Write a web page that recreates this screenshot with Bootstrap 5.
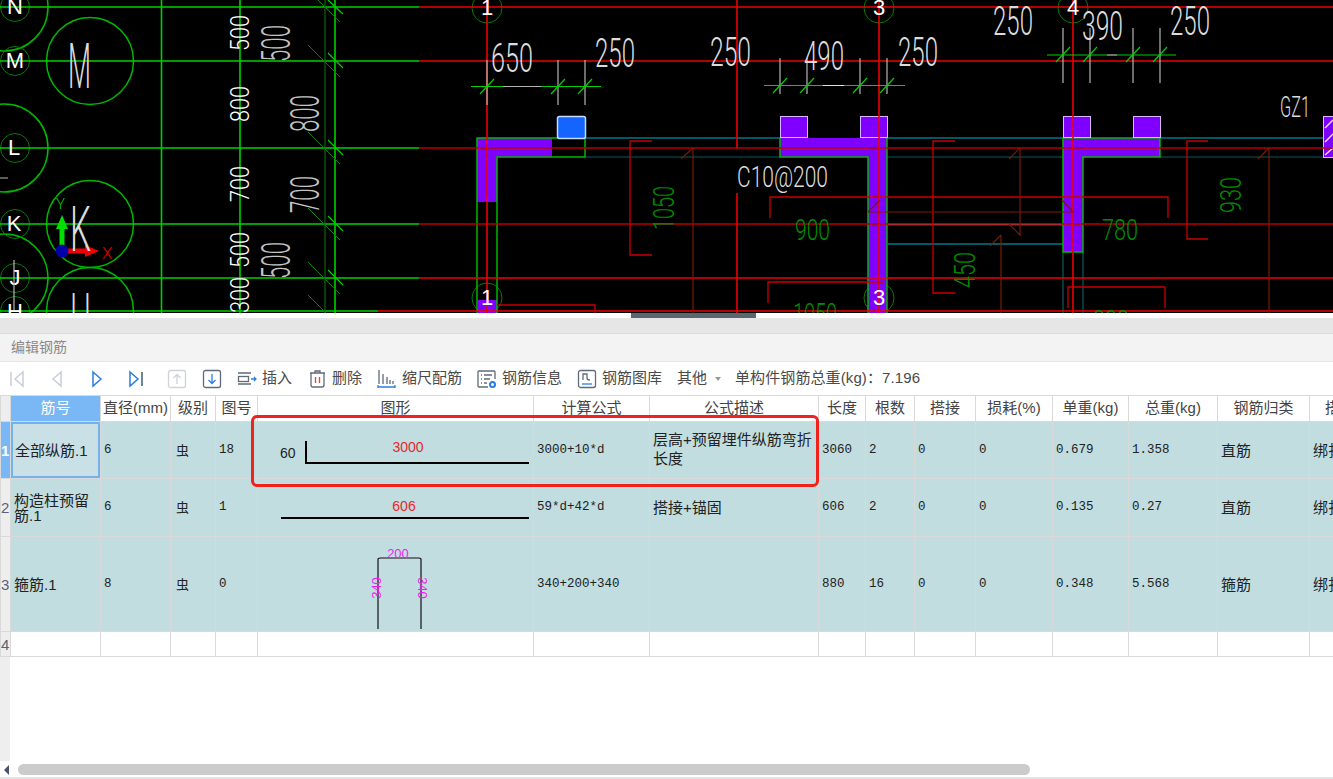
<!DOCTYPE html>
<html lang="zh-CN">
<head>
  <meta charset="UTF-8">
  <title>编辑钢筋</title>
  <link href="https://cdn.jsdelivr.net/npm/bootstrap@5.3.3/dist/css/bootstrap.min.css" rel="stylesheet">
  <style>
    html, body { height: 779px; overflow: hidden; background: #fff; }
    body { font-family: "Liberation Sans", "Noto Sans CJK SC", sans-serif; color: #333; }

    /* drawing canvas */
    .cad-view { height: 313px; background: #000; flex: none; }
    .cad-view svg { display: block; }
    .g { stroke: #00d000; fill: none; stroke-width: 1.6; }
    .g-thin { stroke-width: 1.2; }
    .dg { stroke: #0a7a0a; fill: none; stroke-width: 1; }
    .wg { stroke: #00b800; fill: none; stroke-width: 1.5; }
    .r { stroke: #ee0000; fill: none; stroke-width: 1.6; }
    .r-dim { stroke: #b80000; }
    .r-sec { stroke: #c80000; stroke-width: 1.3; }
    .dr { stroke: #7a1a00; fill: none; stroke-width: 1.2; }
    .c { stroke: #00b4c8; fill: none; stroke-width: 1.2; }
    .dc { stroke: #0a5a60; fill: none; stroke-width: 1.2; }
    .gr { stroke: #b5b5b5; fill: none; stroke-width: 1.2; }
    .pu { fill: #8000ff; }
    .cad-t { font-family: Roboto, "Liberation Mono", monospace; font-weight: 300; fill: #dcdcdc; }
    .cad-t .soft { fill: #c4c4c4; }
    .cad-t .bright { fill: #fff; }
    .cad-dim { font-family: Roboto, "Liberation Mono", monospace; font-weight: 300; fill: #008c00; }
    .cad-l { font-family: "Liberation Sans", sans-serif; fill: #fff; font-size: 22px; text-anchor: middle; }

    .split-bar { height: 5px; background: #fff; flex: none; display: flex; justify-content: center; }
    .split-grip { width: 125px; margin-left: 54px; background: #5c6670; }
    .gap-band { height: 15px; background: #e6e6e6; flex: none; }
    .title-bar { height: 28px; background: #f3f3f3; color: #8a8a8a; font-size: 14px; padding-left: 11px; flex: none; border-top: 1px solid #ddd; }
    .tool-bar { height: 34px; padding-left: 7px; font-size: 15px; color: #4a4a4a; flex: none; gap: 15px; border-top: 1px solid #e6e6e6; }
    .tool-nav { gap: 20px; }
    .tool-item { gap: 5px; }
    .tool-item span { width: 60px; white-space: nowrap; }
    .tool-item span.w2 { width: 30px; }
    .caret-mark { width: 0; height: 0; border: 3px solid transparent; border-top: 4px solid #999; margin: 3px 0 0 -7px; }
    .weight-total { white-space: nowrap; margin-left: -1px; letter-spacing: .1px; }

    /* rebar grid */
    .grid-wrap { position: relative; flex: 1 1 auto; overflow: hidden; background: linear-gradient(to right, #eee 10px, #fff 10px); }
    .rebar-table { table-layout: fixed; width: 1400px; border-color: #d9d9d9; --bs-table-bg: transparent; font-size: 15px; color: #222; }
    .rebar-table th { height: 26px; padding: 0; text-align: center; font-weight: 400; font-size: 15px; color: #444; background: #fff; vertical-align: middle; overflow: hidden; white-space: nowrap; }
    .rebar-table th.gut, .rebar-table td.gut { background: #eee; padding: 0; text-align: left; font-size: 15px; font-weight: 400; color: #5a6270; overflow: hidden; }
    .rebar-table th.key-head { background: #7ab8f5; color: #fff; }
    .rebar-table td { padding: 0 3px; vertical-align: middle; background: #c1dde0; line-height: 15px; }
    .rebar-table td.num { font-family: "Liberation Mono", "Noto Sans CJK SC", monospace; font-size: 12.5px; }
    .rebar-table td.gut.on { background: #7ab8f5; color: #fff; font-weight: 700; }
    .rebar-table td.key-on { box-shadow: inset 0 0 0 2px #74b2ee; padding-left: 4px; background: #c8e0e6; }
    .rebar-table td.shape { padding: 0; }
    .rebar-table td.shape svg { display: block; }
    .rebar-table tr.blank td { background: #fff; height: 25px; }
    .rebar-table tr.blank td.gut { background: #eee; }
    .h-57 { height: 56px; }
    .h-58 { height: 57px; }
    .h-95 { height: 94px; }
    .rebar-table td.grade { font-size: 13px; padding-left: 5px; }
    .red-box { position: absolute; left: 251px; top: 20px; width: 568px; height: 72px; border: 3px solid #f0231c; border-radius: 6px; pointer-events: none; }
    .shape-t { font-family: "Liberation Sans", sans-serif; font-size: 14px; }
    .shape-m { font-family: "Liberation Sans", sans-serif; font-size: 13px; fill: #f01ef0; text-anchor: middle; }
    .c-10 { width: 10px; } .c-90 { width: 90px; } .c-70 { width: 70px; } .c-45 { width: 45px; } .c-42 { width: 42px; }
    .c-276 { width: 276px; } .c-116 { width: 116px; } .c-169 { width: 169px; } .c-47 { width: 47px; } .c-49 { width: 49px; }
    .c-61 { width: 61px; } .c-77 { width: 77px; } .c-76 { width: 76px; } .c-89 { width: 89px; } .c-92 { width: 92px; } .c-91 { width: 91px; }

    .scroll-bar { height: 18px; flex: none; padding: 3px 0 0 3px; gap: 3px; border-bottom: 2px solid #e4e4e4; }
    .scroll-arrow { width: 0; height: 0; border: 5px solid transparent; border-right: 5px solid #4a5270; margin-left: -4px; margin-top: 1px; }
    .scroll-thumb { width: 1012px; height: 11px; background: #cbcbcb; border-radius: 6px; margin-left: 6px; }
  </style>
</head>
<body class="d-flex flex-column">

  <div class="cad-view overflow-hidden">
    <svg width="1333" height="313" viewBox="0 0 1333 313">
      <!-- axis bubbles -->
      <g class="wg">
        <circle cx="4" cy="7" r="44"/><circle cx="90" cy="61" r="43.5"/>
        <circle cx="4" cy="148" r="44"/><circle cx="90" cy="224" r="43.5"/>
        <circle cx="4" cy="278" r="44"/><circle cx="90" cy="311" r="43.5"/>
      </g>
      <g class="dg">
        <circle cx="15" cy="7" r="14.5"/><circle cx="15" cy="61" r="14.5"/><circle cx="15" cy="148" r="14.5"/>
        <circle cx="15" cy="224" r="14.5"/><circle cx="15" cy="278" r="14.5"/><circle cx="15" cy="311" r="14.5"/>
        <circle cx="487" cy="8" r="15"/><circle cx="879" cy="8" r="15"/><circle cx="1073" cy="8" r="15"/>
        <circle cx="487" cy="298" r="15"/><circle cx="879" cy="298" r="15"/>
      </g>

      <!-- grid lines -->
      <path class="g" d="M0 7H419M0 61H419M0 148H419M0 224H419M0 278H419M0 311H378"/>
      <path class="g" d="M161.500 0V313M240 0V313M335 0V313"/>
      <path class="dg" d="M325 0V313"/>
      <path class="dg" d="M308 45L340 77M308 132L340 164M308 208L340 240M308 262L340 294M308 295L326 313M318 0L340 22"/>
      <path class="g g-thin" d="M328 53L343 68M328 140L343 155M328 216L343 231M328 270L343 285M328 0L343 14"/>

      <!-- walls -->
      <path class="c" d="M585 138H780M887 138H1063M1160 138H1333M888 244H1063"/>
      <path class="dc" d="M585 157H780M887 157H1063M1160 157H1333M1063 252V313M1083 252V313"/>
      <path d="M888 224.500H1063" stroke="#7aa8a8" stroke-width="1.500"/>
      <path class="pu" d="M477 138H552V157H497V202H477Z"/>
      <path class="pu" d="M780 138H887V313H868V157H780Z"/>
      <path class="pu" d="M1063 138H1160V157H1083V252H1063Z"/>
      <path class="pu" d="M478 300H497V313H478Z"/>
      <path class="wg" d="M477 313V138H585V157H497V313M780 138V157H868V313M887 138V313M1063 138V252H1083V157H1160V138H1063"/>
      <g class="pu" stroke="#d8b8ff" stroke-width="1">
        <rect x="780.500" y="116.500" width="27" height="21"/><rect x="860.500" y="116.500" width="27" height="21"/>
        <rect x="1063.500" y="116.500" width="27" height="21"/><rect x="1133.500" y="116.500" width="27" height="21"/>
        <rect x="1323.500" y="116.500" width="12" height="41"/>
      </g>
      <path d="M1325 128L1333 120M1325 142L1333 134M1325 155L1333 148" stroke="#e8d8ff" stroke-width="1.500"/>
      <rect x="557.500" y="116.500" width="28" height="22" rx="2" fill="#1464ff" stroke="#c8dcff" stroke-width="1.500"/>

      <!-- red lines -->
      <path class="r" d="M419 7H1333M419 61H1333M378 311H1333M419 278H1333"/>
      <path class="r r-dim" d="M419 148H1333M419 224H1333"/>
      <path class="r" d="M487 0V313M737 0V148M737 193V313M879 0V313M1073 0V313"/>
      <path class="r r-sec" d="M652 141H630V255H652M955 141H933V293H955M1208 141H1187V239H1208"/>
      <path class="r r-sec" d="M770 218V197H1168V218M768 303V282H883M1068 308V287H1165V308M497 305H595V313"/>
      <path class="dr" d="M693 148V313M681 159L693 148M1020 148V235L1009 224M1009 159L1020 148M868 212H1073L1062 200M880 200L868 212M1001 235V313M990 246L1001 235M1269 148V313M1258 159L1269 148"/>

      <!-- dimension lines -->
      <path class="g g-thin" d="M471 86.500H503M541 86.500H601M764 85.500H823M844 85.500H905M1047 55H1107M1117 55H1176"/>
      <path class="gr" d="M487 60V105M558 60V105M585 60V105M780 58V94M807 58V94M860 58V94M887 58V94M1063 28V83M1090 28V83M1133 28V83M1160 28V83M503 86.500H541"/>
      <path d="M823 85.500H844M1107 55H1117" stroke="#e0e0e0" stroke-width="1.200"/>
      <path class="g g-thin" d="M480 94L494 79M551 94L565 79M578 94L592 79M773 93L787 78M800 93L814 78M853 93L867 78M880 93L894 78M1056 62L1070 47M1083 62L1097 47M1126 62L1140 47M1153 62L1167 47"/>

      <!-- axis marker -->
      <path d="M62 248V228" stroke="#00e000" stroke-width="5"/><path d="M62 215L68 229H56Z" fill="#00e000"/>
      <path d="M62 251H86" stroke="#f00000" stroke-width="5"/><path d="M99 251L85 245V257Z" fill="#f00000"/>
      <circle cx="62" cy="251" r="6.500" fill="#0000a8"/>
      <text x="102" y="259" font-family="Roboto" font-weight="300" font-size="17" fill="#e00000">X</text>
      <text x="56" y="209" font-family="Roboto" font-weight="300" font-size="15" fill="#00c800">Y</text>

      <!-- axis letters -->
      <text class="cad-l" x="15" y="14">N</text><text class="cad-l" x="15" y="68">M</text><text class="cad-l" x="14" y="155">L</text>
      <text class="cad-l" x="14" y="231">K</text><text class="cad-l" x="15" y="285">J</text><text class="cad-l" x="15" y="319">H</text>
      <path class="gr" d="M14 260V310M0 178H8"/>
      <text class="cad-t" x="68" y="88" font-size="63" textLength="23" lengthAdjust="spacingAndGlyphs">M</text>
      <text class="cad-t" x="70" y="251" font-size="63" textLength="21" lengthAdjust="spacingAndGlyphs">K</text>
      <text class="cad-t" x="70" y="338" font-size="63" textLength="21" lengthAdjust="spacingAndGlyphs">H</text>
      <text class="cad-l" x="487" y="15">1</text><text class="cad-l" x="879" y="15">3</text><text class="cad-l" x="1073" y="15">4</text>
      <text class="cad-l" x="487" y="305">1</text><text class="cad-l" x="879" y="305">3</text>

      <!-- dimension text -->
      <g class="cad-t" font-size="40">
        <text x="491" y="72" textLength="42" lengthAdjust="spacingAndGlyphs">650</text>
        <text x="595" y="67" textLength="40" lengthAdjust="spacingAndGlyphs">250</text>
        <text x="710" y="66" textLength="41" lengthAdjust="spacingAndGlyphs">250</text>
        <text x="804" y="70" textLength="40" lengthAdjust="spacingAndGlyphs">490</text>
        <text x="898" y="66" textLength="40" lengthAdjust="spacingAndGlyphs">250</text>
        <text x="993" y="35" textLength="40" lengthAdjust="spacingAndGlyphs">250</text>
        <text x="1082" y="40" textLength="41" lengthAdjust="spacingAndGlyphs">390</text>
        <text x="1170" y="35" textLength="40" lengthAdjust="spacingAndGlyphs">250</text>
      </g>
      <g class="cad-t">
        <text x="1280" y="117" font-size="29" textLength="30" lengthAdjust="spacingAndGlyphs">GZ1</text>
        <text x="737" y="187" font-size="29" textLength="91" lengthAdjust="spacingAndGlyphs">C10@200</text>
        <text class="bright" transform="translate(249 51) rotate(-90)" font-size="25" textLength="36" lengthAdjust="spacingAndGlyphs">500</text>
        <text class="bright" transform="translate(249 122) rotate(-90)" font-size="25" textLength="36" lengthAdjust="spacingAndGlyphs">800</text>
        <text class="bright" transform="translate(249 202) rotate(-90)" font-size="25" textLength="36" lengthAdjust="spacingAndGlyphs">700</text>
        <text class="bright" transform="translate(249 268) rotate(-90)" font-size="25" textLength="36" lengthAdjust="spacingAndGlyphs">500</text>
        <text class="bright" transform="translate(249 313) rotate(-90)" font-size="25" textLength="36" lengthAdjust="spacingAndGlyphs">300</text>
        <text class="soft" transform="translate(290 62) rotate(-90)" font-size="40" textLength="37" lengthAdjust="spacingAndGlyphs">500</text>
        <text class="soft" transform="translate(319 132) rotate(-90)" font-size="40" textLength="37" lengthAdjust="spacingAndGlyphs">800</text>
        <text class="soft" transform="translate(319 213) rotate(-90)" font-size="40" textLength="37" lengthAdjust="spacingAndGlyphs">700</text>
        <text class="soft" transform="translate(290 279) rotate(-90)" font-size="40" textLength="37" lengthAdjust="spacingAndGlyphs">500</text>
      </g>
      <g class="cad-dim">
        <text x="795" y="240" font-size="29" textLength="35" lengthAdjust="spacingAndGlyphs">900</text>
        <text x="1102" y="240" font-size="29" textLength="36" lengthAdjust="spacingAndGlyphs">780</text>
        <text x="793" y="324" font-size="29" textLength="44" lengthAdjust="spacingAndGlyphs">1050</text>
        <text x="1093" y="331" font-size="29" textLength="36" lengthAdjust="spacingAndGlyphs">888</text>
        <text transform="translate(674 230) rotate(-90)" font-size="29" textLength="44" lengthAdjust="spacingAndGlyphs">1050</text>
        <text transform="translate(975 288) rotate(-90)" font-size="29" textLength="36" lengthAdjust="spacingAndGlyphs">450</text>
        <text transform="translate(1241 213) rotate(-90)" font-size="29" textLength="36" lengthAdjust="spacingAndGlyphs">930</text>
      </g>
    </svg>
  </div>

  <div class="split-bar"><div class="split-grip"></div></div>
  <div class="gap-band"></div>
  <div class="title-bar d-flex align-items-center">编辑钢筋</div>

  <div class="tool-bar d-flex align-items-center">
    <div class="tool-nav d-flex align-items-center">
      <svg width="20" height="20" viewBox="0 0 20 20" fill="none" stroke="#c9ced6" stroke-width="1.500"><path d="M4 3V17M16 3L8 10L16 17Z"/></svg>
      <svg width="20" height="20" viewBox="0 0 20 20" fill="none" stroke="#c9ced6" stroke-width="1.500"><path d="M14 3L6 10L14 17Z"/></svg>
      <svg width="20" height="20" viewBox="0 0 20 20" fill="none" stroke="#2b7de0" stroke-width="1.500"><path d="M6 3L14 10L6 17Z"/></svg>
      <svg width="20" height="20" viewBox="0 0 20 20" fill="none" stroke="#2b7de0" stroke-width="1.500"><path d="M3 3L11 10L3 17Z"/><path d="M15 3V17" stroke="#3b5a85"/></svg>
      <svg width="20" height="20" viewBox="0 0 20 20" fill="none" stroke="#cfd3d8" stroke-width="1.300"><rect x="1.500" y="1.500" width="17" height="17" rx="2"/><path d="M10 15V6M6.500 9L10 5.500L13.500 9"/></svg>
    </div>
    <svg width="20" height="20" viewBox="0 0 20 20" fill="none" stroke="#5f6b7a" stroke-width="1.300"><rect x="1.500" y="1.500" width="17" height="17" rx="2"/><path d="M10 5V14M6.500 11L10 14.500L13.500 11" stroke="#2b7de0"/></svg>
    <div class="tool-item d-flex align-items-center">
      <svg width="20" height="20" viewBox="0 0 20 20" fill="none" stroke="#5f6b7a" stroke-width="1.300"><path d="M1 4H14M1 15H14"/><rect x="1.500" y="7.500" width="10" height="5"/><path d="M14 10H19M17 8L19 10L17 12" stroke="#2b7de0"/></svg>
      <span class="w2">插入</span>
    </div>
    <div class="tool-item d-flex align-items-center">
      <svg width="20" height="20" viewBox="0 0 20 20" fill="none" stroke="#5f6b7a" stroke-width="1.300"><path d="M3 4H18M8 4V2H13V4"/><path d="M4 4V16Q4 18 6 18H15Q17 18 17 16V4"/><path d="M8.500 8V14M12.500 8V14" stroke="#d8483c"/></svg>
      <span class="w2">删除</span>
    </div>
    <div class="tool-item d-flex align-items-center">
      <svg width="20" height="20" viewBox="0 0 20 20" fill="none" stroke="#5f6b7a" stroke-width="1.300"><path d="M2 1V15M6 5V15M10 8V15M13 11V15M16 12V15"/><path d="M1 18H18M1 16V19M18 16V19" stroke="#2b7de0"/></svg>
      <span>缩尺配筋</span>
    </div>
    <div class="tool-item d-flex align-items-center">
      <svg width="20" height="20" viewBox="0 0 20 20" fill="none" stroke="#5f6b7a" stroke-width="1.300"><path d="M18 10V3Q18 2 17 2H2Q1 2 1 3V17Q1 18 2 18H11"/><path d="M4 6H5M7 6H15M4 10H5M7 10H13M4 14H5M7 14H10"/><circle cx="15.500" cy="15.500" r="2.500" stroke="#2b7de0" stroke-width="2"/></svg>
      <span>钢筋信息</span>
    </div>
    <div class="tool-item d-flex align-items-center">
      <svg width="20" height="20" viewBox="0 0 20 20" fill="none" stroke="#5f6b7a" stroke-width="1.300"><rect x="1.500" y="1.500" width="17" height="17" rx="2"/><path d="M6 11V5H10V9Q10 11 13 11"/><path d="M5 15H15" stroke="#2b7de0"/></svg>
      <span>钢筋图库</span>
    </div>
    <span>其他</span>
    <span class="caret-mark"></span>
    <span class="weight-total">单构件钢筋总重(kg)：7.196</span>
  </div>

  <div class="grid-wrap">
    <table class="table table-bordered mb-0 rebar-table">
      <colgroup>
        <col class="c-10"><col class="c-90"><col class="c-70"><col class="c-45"><col class="c-42">
        <col class="c-276"><col class="c-116"><col class="c-169"><col class="c-47"><col class="c-49">
        <col class="c-61"><col class="c-77"><col class="c-76"><col class="c-89"><col class="c-92"><col class="c-91">
      </colgroup>
      <thead>
        <tr>
          <th class="gut"></th><th class="key-head">筋号</th><th>直径(mm)</th><th>级别</th><th>图号</th><th>图形</th><th>计算公式</th><th>公式描述</th>
          <th>长度</th><th>根数</th><th>搭接</th><th>损耗(%)</th><th>单重(kg)</th><th>总重(kg)</th><th>钢筋归类</th><th>搭接形式</th>
        </tr>
      </thead>
      <tbody>
        <tr class="h-57">
          <td class="gut on">1</td><td class="key-on">全部纵筋.1</td><td class="num">6</td><td class="grade">虫</td><td class="num">18</td>
          <td class="shape">
            <svg width="276" height="56" viewBox="0 0 276 56">
              <text class="shape-t" x="22" y="36" fill="#222">60</text>
              <path d="M48 19V41H271" fill="none" stroke="#000" stroke-width="2"/>
              <text class="shape-t" x="150" y="30" fill="#e8262c" text-anchor="middle">3000</text>
            </svg>
          </td>
          <td class="num">3000+10*d</td><td class="lh-sm">层高+预留埋件纵筋弯折长度</td><td class="num">3060</td><td class="num">2</td><td class="num">0</td><td class="num">0</td>
          <td class="num">0.679</td><td class="num">1.358</td><td>直筋</td><td class="text-nowrap">绑扎</td>
        </tr>
        <tr class="h-58">
          <td class="gut">2</td><td>构造柱预留筋.1</td><td class="num">6</td><td class="grade">虫</td><td class="num">1</td>
          <td class="shape">
            <svg width="276" height="57" viewBox="0 0 276 57">
              <path d="M23 39H271" stroke="#000" stroke-width="2"/>
              <text class="shape-t" x="146" y="32" fill="#e8262c" text-anchor="middle">606</text>
            </svg>
          </td>
          <td class="num">59*d+42*d</td><td>搭接+锚固</td><td class="num">606</td><td class="num">2</td><td class="num">0</td><td class="num">0</td>
          <td class="num">0.135</td><td class="num">0.27</td><td>直筋</td><td class="text-nowrap">绑扎</td>
        </tr>
        <tr class="h-95">
          <td class="gut">3</td><td>箍筋.1</td><td class="num">8</td><td class="grade">虫</td><td class="num">0</td>
          <td class="shape">
            <svg width="276" height="94" viewBox="0 0 276 94">
              <path d="M120 92V22Q120 21 122 21H161Q163 21 163 22V92" fill="none" stroke="#111" stroke-width="1.200"/>
              <text class="shape-m" x="140" y="21">200</text>
              <text class="shape-m" transform="translate(123 51) rotate(-90)">340</text>
              <text class="shape-m" transform="translate(160 51) rotate(90)">340</text>
            </svg>
          </td>
          <td class="num">340+200+340</td><td></td><td class="num">880</td><td class="num">16</td><td class="num">0</td><td class="num">0</td>
          <td class="num">0.348</td><td class="num">5.568</td><td>箍筋</td><td class="text-nowrap">绑扎</td>
        </tr>
        <tr class="blank">
          <td class="gut">4</td><td></td><td></td><td></td><td></td><td></td><td></td><td></td><td></td><td></td><td></td><td></td><td></td><td></td><td></td><td></td>
        </tr>
      </tbody>
    </table>
    <div class="red-box"></div>
  </div>

  <div class="scroll-bar d-flex align-items-start">
    <div class="scroll-arrow"></div>
    <div class="scroll-thumb"></div>
  </div>

</body>
</html>
